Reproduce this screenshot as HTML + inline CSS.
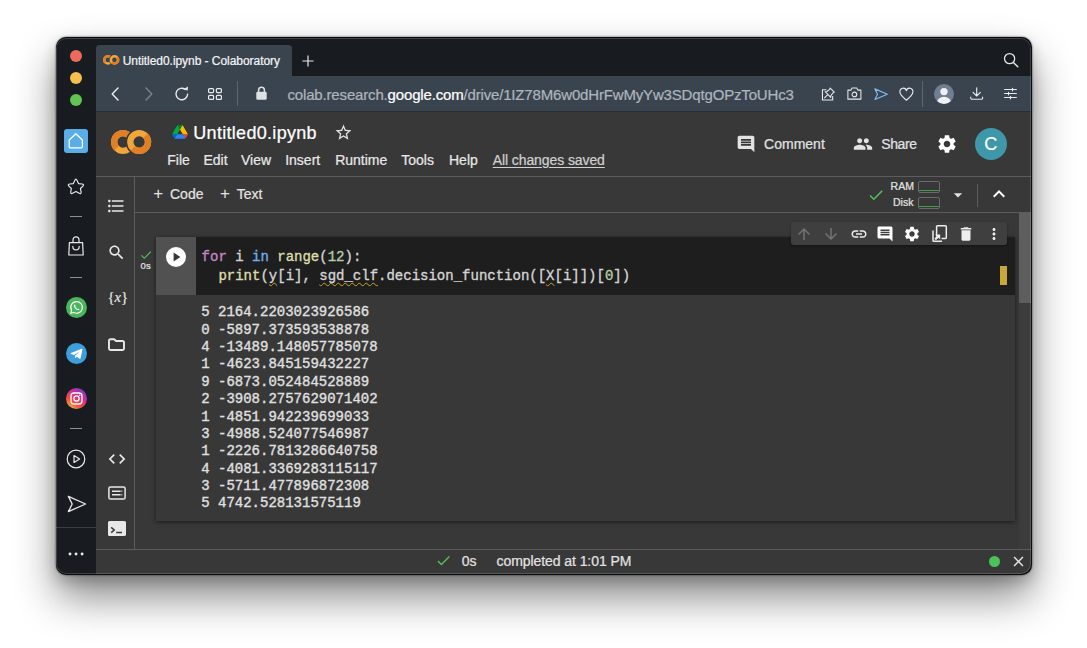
<!DOCTYPE html>
<html lang="en">
<head>
<meta charset="utf-8">
<title>Untitled0.ipynb - Colaboratory</title>
<style>
*{box-sizing:border-box;margin:0;padding:0}
html,body{width:1087px;height:648px;overflow:hidden;background:#fff}
body{position:relative;font-family:"Liberation Sans",sans-serif;color:#e3e3e3}
.abs{position:absolute}
#shadow{position:absolute;left:55.5px;top:37px;width:976px;height:537.5px;border-radius:10.5px;background:#0c0d0f;box-shadow:0 22px 42px rgba(0,0,0,.47),0 0 2px rgba(0,0,0,.8),0 6px 14px rgba(0,0,0,.2)}
#win{position:absolute;left:56px;top:37.5px;width:975px;height:536.5px;border-radius:10px;background:#181b20;overflow:hidden}
#o{position:absolute;left:-56px;top:-37.5px;width:1087px;height:648px}
.t{position:absolute;white-space:pre;line-height:1;-webkit-text-stroke:0.22px currentColor}
.ic{position:absolute;fill:currentColor;overflow:visible}
.mono{font-family:"Liberation Mono","DejaVu Sans Mono",monospace;-webkit-text-stroke:0.35px currentColor}
.sq{text-decoration:underline wavy #cda52b;text-decoration-thickness:1px;text-underline-offset:1.5px;text-decoration-skip-ink:none}
</style>
</head>
<body>
<div id="shadow"></div>
<div id="win"><div id="o">
<div class="abs" style="left:70px;top:50px;width:12px;height:12px;background:#ed6a5e;border-radius:50%"></div>
<div class="abs" style="left:70px;top:72px;width:12px;height:12px;background:#f4bf4f;border-radius:50%"></div>
<div class="abs" style="left:70px;top:94px;width:12px;height:12px;background:#61c554;border-radius:50%"></div>
<div class="abs" style="left:96px;top:45px;width:196px;height:31px;background:#3a444f;border-radius:3.5px 3.5px 0 0"></div>
<div class="abs" style="left:96px;top:76px;width:935px;height:35px;background:#3a444f;"></div>
<div class="abs" style="left:96px;top:111px;width:935px;height:1px;background:#2a2e33;"></div>
<svg class="ic" style="left:102.60px;top:55.30px;" width="16.4" height="9.8" viewBox="0 0 40.2 24"><g fill="none" stroke-width="6.3"><circle cx="12" cy="12" r="8.85" stroke="#f0a63a"/><path d="M18.26 5.74 A8.85 8.85 0 0 0 5.74 18.26" stroke="#e07f26"/></g><circle cx="28.2" cy="12" r="13.6" fill="#3a444f"/><g fill="none" stroke-width="6.3"><circle cx="28.2" cy="12" r="8.85" stroke="#f0a63a"/><path d="M34.46 5.74 A8.85 8.85 0 0 1 21.94 18.26" stroke="#e07f26"/></g></svg>
<div class="t " style="left:122.70px;top:54.50px;font-size:12px;color:#f2f3f4;letter-spacing:-0.05px">Untitled0.ipynb - Colaboratory</div>
<svg class="ic" style="left:301.50px;top:54.50px;" width="12" height="12" viewBox="0 0 12 12"><path d="M6 0.4V11.6M0.4 6H11.6" stroke="#e8eaec" stroke-width="1.2" fill="none"/></svg>
<svg class="ic" style="left:1003.00px;top:52.00px;" width="16" height="16" viewBox="0 0 16 16"><circle cx="6.6" cy="6.6" r="5.1" stroke="#e8eaec" stroke-width="1.25" fill="none"/><path d="M10.4 10.4L14.8 14.8" stroke="#e8eaec" stroke-width="1.35" fill="none" stroke-linecap="round"/></svg>
<svg class="ic" style="left:111.40px;top:86.60px;" width="8" height="14" viewBox="0 0 8 14"><path d="M7 1L1.2 7L7 13" stroke="#e8eaec" stroke-width="1.5" fill="none" stroke-linecap="round" stroke-linejoin="round"/></svg>
<svg class="ic" style="left:145.30px;top:86.60px;" width="8" height="14" viewBox="0 0 8 14"><path d="M1 1L6.8 7L1 13" stroke="#76808b" stroke-width="1.5" fill="none" stroke-linecap="round" stroke-linejoin="round"/></svg>
<svg class="ic" style="left:174.30px;top:85.60px;" width="16" height="16" viewBox="0 0 16 16"><path d="M13.6 8.3A5.8 5.8 0 1 1 11.2 3.3" stroke="#e8eaec" stroke-width="1.4" fill="none" stroke-linecap="round"/><path d="M9.2 3.9L13.9 4.3L13.6 0.3Z" fill="#e8eaec" transform="rotate(8 12 3)"/></svg>
<svg class="ic" style="left:208.40px;top:87.60px;" width="14" height="12" viewBox="0 0 14 12"><g fill="none" stroke="#e8eaec" stroke-width="1.2"><rect x="0.6" y="0.6" width="5" height="4" rx="1"/><rect x="8.4" y="0.6" width="5" height="4" rx="1"/><rect x="0.6" y="7.4" width="5" height="4" rx="1"/><rect x="8.4" y="7.4" width="5" height="4" rx="1"/></g></svg>
<div class="abs" style="left:237px;top:81px;width:1px;height:25px;background:#5c6772;"></div>
<svg class="ic" style="left:256.20px;top:86.20px;" width="11" height="14" viewBox="0 0 11 14"><path d="M2.6 6V4.2a2.9 2.9 0 0 1 5.8 0V6" stroke="#dfe2e5" stroke-width="1.5" fill="none"/><rect x="0.3" y="5.8" width="10.4" height="8" rx="1.4" fill="#dfe2e5"/></svg>
<div class="t " style="left:287.50px;top:86.80px;font-size:15px;color:#aeb5bc;letter-spacing:-0.165px"><span style="color:#aeb5bc">colab.research.</span><span style="color:#fff">google.com</span><span style="color:#aeb5bc">/drive/1IZ78M6w0dHrFwMyYw3SDqtgOPzToUHc3</span></div>
<svg class="ic" style="left:821.30px;top:86.70px;" width="14.4" height="14.4" viewBox="0 0 16 16"><g fill="none" stroke="#e8eaec" stroke-width="1.2" stroke-linejoin="round"><path d="M6 3H1.6V14.4H13V10"/><path d="M10.2 1.2L14.8 5.8L13.4 6.4L11 9.6L10.8 11.6L4.6 5.2L6.6 5L9.6 2.6Z"/><path d="M7.6 8.4L3.6 12.4"/></g></svg>
<svg class="ic" style="left:846.60px;top:87.20px;" width="14.8" height="13" viewBox="0 0 17 15"><g fill="none" stroke="#e8eaec" stroke-width="1.2" stroke-linejoin="round"><path d="M1 3.6H4.6L5.8 1.2H11.2L12.4 3.6H16V14H1Z"/><circle cx="8.5" cy="8.6" r="2.7"/></g></svg>
<svg class="ic" style="left:873.50px;top:87.80px;" width="14.2" height="12.4" viewBox="0 0 16 14"><path d="M1 1L15 7L1 13L4 7Z" fill="none" stroke="#7fbdee" stroke-width="1.3" stroke-linejoin="round"/></svg>
<svg class="ic" style="left:898.70px;top:87.90px;" width="14.8" height="13" viewBox="0 0 16 14"><path d="M8 13.2C2.5 8.8 1 6.6 1 4.4A3.4 3.4 0 0 1 8 3A3.4 3.4 0 0 1 15 4.4C15 6.6 13.5 8.8 8 13.2Z" fill="none" stroke="#e8eaec" stroke-width="1.2" stroke-linejoin="round"/></svg>
<div class="abs" style="left:922.3px;top:81px;width:1px;height:26px;background:#5c6772;"></div>
<svg class="ic" style="left:933.90px;top:84.00px;" width="20" height="20" viewBox="0 0 20 20"><defs><clipPath id="av"><circle cx="10" cy="10" r="10"/></clipPath></defs><circle cx="10" cy="10" r="10" fill="#717d90"/><g clip-path="url(#av)" fill="#eef0f3"><circle cx="10" cy="7.6" r="3.7"/><ellipse cx="10" cy="18.2" rx="7" ry="5.4"/></g></svg>
<svg class="ic" style="left:970.10px;top:87.30px;" width="13.4" height="13" viewBox="0 0 14 13.6"><g fill="none" stroke="#e8eaec" stroke-width="1.2" stroke-linecap="round" stroke-linejoin="round"><path d="M7 0.8V9.2M3.2 5.6L7 9.4L10.8 5.6"/><path d="M0.8 10.6V11.6a1.2 1.2 0 0 0 1.2 1.2H12a1.2 1.2 0 0 0 1.2 -1.2V10.6"/></g></svg>
<svg class="ic" style="left:1004.00px;top:88.00px;" width="13" height="11" viewBox="0 0 13 11"><g fill="none" stroke="#e8eaec" stroke-width="1.15" stroke-linecap="round"><path d="M0.6 1.5H12.4M0.6 5.5H12.4M0.6 9.5H12.4"/><path d="M8.5 0.2V2.8M4.5 4.2V6.8M6.5 8.2V10.8"/></g></svg>
<div class="abs" style="left:64px;top:128.5px;width:24px;height:24px;background:#5aaee8;border-radius:3px"></div>
<svg class="ic" style="left:67.20px;top:131.60px;" width="17.6" height="17.6" viewBox="0 0 16 16"><path d="M2 7.2L8 1.6L14 7.2V13.2a1.2 1.2 0 0 1 -1.2 1.2H3.2A1.2 1.2 0 0 1 2 13.2Z" fill="none" stroke="#fff" stroke-width="1.15" stroke-linejoin="round"/></svg>
<svg class="ic" style="left:67.10px;top:177.55px;" width="17.8" height="16.9" viewBox="0 0 20 19"><path d="M10 1.3C10.5 1.3 10.9 1.9 11.3 2.8L12.9 6.3L16.8 6.8C18.6 7 19.2 7.9 17.9 9.1L15.1 11.8L15.8 15.6C16.1 17.4 15.3 18 13.7 17.1L10 15.2L6.3 17.1C4.7 18 3.9 17.4 4.2 15.6L4.9 11.8L2.1 9.1C0.8 7.9 1.4 7 3.2 6.8L7.1 6.3L8.7 2.8C9.1 1.9 9.5 1.3 10 1.3Z" fill="none" stroke="#e8eaec" stroke-width="1.3" stroke-linejoin="round"/></svg>
<div class="abs" style="left:70px;top:216.2px;width:12px;height:1px;background:#8b9096;"></div>
<svg class="ic" style="left:68.00px;top:236.30px;" width="16" height="20" viewBox="0 0 16 20"><g fill="none" stroke="#e8eaec" stroke-width="1.2" stroke-linejoin="round"><path d="M1.4 6.6H14.6L15.2 19H0.8Z"/><path d="M5 6.4V3.8a3 3 0 0 1 6 0V6.4"/><path d="M4.8 10.4a3.2 3.4 0 0 0 6.4 0" stroke-linecap="round"/></g></svg>
<div class="abs" style="left:70px;top:276.9px;width:12px;height:1px;background:#8b9096;"></div>
<svg class="ic" style="left:65.50px;top:296.50px;" width="21" height="21" viewBox="0 0 21 21"><circle cx="10.5" cy="10.5" r="10.5" fill="#4ab65c"/><path d="M10.6 4.6a5.8 5.8 0 0 0 -5 8.8L4.8 16.2L7.7 15.4A5.8 5.8 0 1 0 10.6 4.6Z" fill="none" stroke="#fff" stroke-width="1.1"/><path d="M8.5 7.6C8.2 7.6 7.7 8.2 7.8 9C8 10.6 10.2 12.9 12 13.2C12.8 13.3 13.5 12.8 13.5 12.3L12.2 11.5L11.6 12C10.7 11.7 9.6 10.6 9.3 9.7L9.8 9.1L9.1 7.7Z" fill="#fff"/></svg>
<svg class="ic" style="left:65.50px;top:342.50px;" width="21" height="21" viewBox="0 0 21 21"><circle cx="10.5" cy="10.5" r="10.5" fill="#3d9fdc"/><path d="M4.4 10.3L15.6 5.8C16.1 5.6 16.5 5.9 16.4 6.5L14.6 15.3C14.5 15.9 14.1 16 13.6 15.7L10.8 13.7L9.4 15C9.2 15.2 9 15.1 9 14.8L9.2 12.5L14 8.2L8 11.9L5.4 11.1C4.8 10.9 4.8 10.5 4.4 10.3Z" fill="#fff"/></svg>
<svg class="ic" style="left:65.50px;top:387.50px;" width="21" height="21" viewBox="0 0 21 21"><defs><linearGradient id="ig" x1="0.15" y1="1" x2="0.85" y2="0"><stop offset="0" stop-color="#fdc04a"/><stop offset="0.3" stop-color="#f5503a"/><stop offset="0.6" stop-color="#d52f8c"/><stop offset="1" stop-color="#6a3fd0"/></linearGradient></defs><circle cx="10.5" cy="10.5" r="10.5" fill="url(#ig)"/><g fill="none" stroke="#fff" stroke-width="1.3"><rect x="5" y="5" width="11" height="11" rx="3"/><circle cx="10.5" cy="10.5" r="2.6"/></g><circle cx="13.7" cy="7.3" r="0.8" fill="#fff"/></svg>
<div class="abs" style="left:70px;top:428px;width:12px;height:1px;background:#8b9096;"></div>
<svg class="ic" style="left:66.00px;top:448.50px;" width="20" height="20" viewBox="0 0 20 20"><g fill="none" stroke="#e8eaec" stroke-width="1.2" stroke-linejoin="round"><circle cx="10" cy="10" r="8.8"/><path d="M8 6.6L13.6 10L8 13.4Z"/></g></svg>
<svg class="ic" style="left:66.50px;top:494.70px;" width="20" height="18" viewBox="0 0 20 18"><path d="M1.4 1.4L18.6 9L1.4 16.6L5.2 9Z" fill="none" stroke="#e8eaec" stroke-width="1.3" stroke-linejoin="round"/></svg>
<div class="abs" style="left:56px;top:527px;width:40px;height:1px;background:#3a3f46;"></div>
<svg class="ic" style="left:67.00px;top:552.00px;" width="18" height="4" viewBox="0 0 18 4"><g fill="#e8eaec"><circle cx="3" cy="2" r="1.45"/><circle cx="9.05" cy="2" r="1.45"/><circle cx="15.1" cy="2" r="1.45"/></g></svg>
<div class="abs" style="left:96px;top:112px;width:935px;height:462px;background:#383838;"></div>
<svg class="ic" style="left:110.80px;top:129.80px;" width="40.2" height="24" viewBox="0 0 40.2 24"><g fill="none" stroke-width="6.3"><circle cx="12" cy="12" r="8.85" stroke="#f0a63a"/><path d="M18.26 5.74 A8.85 8.85 0 0 0 5.74 18.26" stroke="#e07f26"/></g><circle cx="28.2" cy="12" r="13.6" fill="#383838"/><g fill="none" stroke-width="6.3"><circle cx="28.2" cy="12" r="8.85" stroke="#f0a63a"/><path d="M34.46 5.74 A8.85 8.85 0 0 1 21.94 18.26" stroke="#e07f26"/></g></svg>
<svg class="ic" style="left:172.00px;top:125.20px;" width="16" height="13.8" viewBox="0 0 87.3 78"><path d="m6.6 66.85 3.85 6.65c.8 1.4 1.95 2.5 3.3 3.3l13.75-23.8h-27.5c0 1.55.4 3.1 1.2 4.5z" fill="#0066da"/><path d="m43.65 25-13.75-23.8c-1.35.8-2.5 1.9-3.3 3.3l-25.4 44a9.06 9.06 0 0 0 -1.2 4.5h27.5z" fill="#00ac47"/><path d="m73.55 76.8c1.35-.8 2.5-1.9 3.3-3.3l1.6-2.75 7.65-13.25c.8-1.4 1.2-2.95 1.2-4.5h-27.502l5.852 11.5z" fill="#ea4335"/><path d="m43.65 25 13.75-23.8c-1.35-.8-2.9-1.2-4.5-1.2h-18.5c-1.6 0-3.15.45-4.5 1.2z" fill="#00832d"/><path d="m59.8 53h-32.3l-13.75 23.8c1.35.8 2.9 1.2 4.5 1.2h50.8c1.6 0 3.15-.45 4.5-1.2z" fill="#2684fc"/><path d="m73.4 26.500-12.700-22c-.8-1.400-1.950-2.500-3.300-3.300l-13.750 23.800 16.150 28h27.450c0-1.550-.4-3.100-1.200-4.500z" fill="#ffba00"/></svg>
<div class="t " style="left:193.30px;top:123.90px;font-size:18px;color:#fff;letter-spacing:0.3px">Untitled0.ipynb</div>
<svg class="ic" style="left:333.50px;top:122.50px;color:#e3e3e3;" width="19" height="19" viewBox="0 0 24 24"><path d="M22 9.24l-7.19-.62L12 2 9.19 8.63 2 9.24l5.46 4.73L5.82 21 12 17.27 18.18 21l-1.63-7.03L22 9.24zM12 15.4l-3.76 2.27 1-4.28-3.32-2.88 4.38-.38L12 6.1l1.71 4.04 4.38.38-3.32 2.88 1 4.28L12 15.4z"/></svg>
<div class="t " style="left:167.30px;top:152.90px;font-size:14px;color:#e8e8e8;">File</div>
<div class="t " style="left:203.50px;top:152.90px;font-size:14px;color:#e8e8e8;">Edit</div>
<div class="t " style="left:241.00px;top:152.90px;font-size:14px;color:#e8e8e8;">View</div>
<div class="t " style="left:285.20px;top:152.90px;font-size:14px;color:#e8e8e8;">Insert</div>
<div class="t " style="left:335.20px;top:152.90px;font-size:14px;color:#e8e8e8;">Runtime</div>
<div class="t " style="left:401.30px;top:152.90px;font-size:14px;color:#e8e8e8;">Tools</div>
<div class="t " style="left:449.00px;top:152.90px;font-size:14px;color:#e8e8e8;">Help</div>
<div class="t " style="left:492.70px;top:152.90px;font-size:14px;color:#d0d0d0;text-decoration:underline;text-underline-offset:2px;letter-spacing:-0.09px">All changes saved</div>
<div class="abs" style="left:96px;top:176px;width:935px;height:1px;background:#5d5d5d;"></div>
<svg class="ic" style="left:736.20px;top:134.10px;color:#e3e3e3;" width="20" height="20" viewBox="0 0 24 24"><path d="M21.99 4c0-1.1-.89-2-1.99-2H4c-1.1 0-2 .9-2 2v12c0 1.1.9 2 2 2h14l4 4-.01-18zM18 14H6v-2h12v2zm0-3H6V9h12v2zm0-3H6V6h12v2z"/></svg>
<div class="t " style="left:764.10px;top:137.20px;font-size:14px;color:#e3e3e3;">Comment</div>
<svg class="ic" style="left:853.20px;top:133.60px;color:#e3e3e3;" width="20" height="20" viewBox="0 0 24 24"><path d="M16 11c1.66 0 2.99-1.34 2.99-3S17.66 5 16 5c-1.66 0-3 1.34-3 3s1.34 3 3 3zm-8 0c1.66 0 2.99-1.34 2.99-3S9.66 5 8 5C6.34 5 5 6.34 5 8s1.34 3 3 3zm0 2c-2.33 0-7 1.17-7 3.5V19h14v-2.5c0-2.33-4.67-3.5-7-3.5zm8 0c-.29 0-.62.02-.97.05 1.16.84 1.97 1.97 1.97 3.45V19h6v-2.5c0-2.33-4.67-3.5-7-3.5z"/></svg>
<div class="t " style="left:881.30px;top:137.20px;font-size:14px;color:#e3e3e3;letter-spacing:-0.4px">Share</div>
<svg class="ic" style="left:935.70px;top:133.00px;color:#fff;" width="22" height="22" viewBox="0 0 24 24"><path d="M19.14 12.94c.04-.3.06-.61.06-.94 0-.32-.02-.64-.07-.94l2.03-1.58c.18-.14.23-.41.12-.61l-1.92-3.32c-.12-.22-.37-.29-.59-.22l-2.39.96c-.5-.38-1.03-.7-1.62-.94l-.36-2.54c-.04-.24-.24-.41-.48-.41h-3.84c-.24 0-.43.17-.47.41l-.36 2.54c-.59.24-1.13.57-1.62.94l-2.39-.96c-.22-.08-.47 0-.59.22L2.74 8.87c-.12.21-.08.47.12.61l2.03 1.58c-.05.3-.09.63-.09.94s.02.64.07.94l-2.03 1.58c-.18.14-.23.41-.12.61l1.92 3.32c.12.22.37.29.59.22l2.39-.96c.5.38 1.03.7 1.62.94l.36 2.54c.05.24.24.41.48.41h3.84c.24 0 .44-.17.47-.41l.36-2.54c.59-.24 1.13-.56 1.62-.94l2.39.96c.22.08.47 0 .59-.22l1.92-3.32c.12-.22.07-.47-.12-.61l-2.01-1.58zM12 15.6c-1.98 0-3.6-1.62-3.6-3.6s1.62-3.6 3.6-3.6 3.6 1.62 3.6 3.6-1.62 3.6-3.6 3.6z"/></svg>
<div class="abs" style="left:974.8px;top:127.9px;width:32px;height:32px;background:#3f98a9;border-radius:50%"></div>
<div class="t " style="left:984.30px;top:135.30px;font-size:18px;color:#fff;">C</div>
<div class="t " style="left:153.30px;top:185.10px;font-size:17px;color:#e3e3e3;-webkit-text-stroke:0">+</div>
<div class="t " style="left:170.00px;top:187.40px;font-size:14px;color:#e3e3e3;">Code</div>
<div class="t " style="left:220.00px;top:185.10px;font-size:17px;color:#e3e3e3;-webkit-text-stroke:0">+</div>
<div class="t " style="left:236.80px;top:187.40px;font-size:14px;color:#e3e3e3;">Text</div>
<div class="abs" style="left:134px;top:212px;width:897px;height:1px;background:#5d5d5d;"></div>
<svg class="ic" style="left:867.00px;top:186.40px;color:#4fc35a;" width="18" height="18" viewBox="0 0 24 24"><path d="M9 16.17L4.83 12l-1.42 1.41L9 19 21 7l-1.41-1.41z"/></svg>
<div class="t " style="left:890.60px;top:181.45px;font-size:10.5px;color:#e3e3e3;">RAM</div>
<div class="t " style="left:893.00px;top:197.35px;font-size:10.5px;color:#e3e3e3;">Disk</div>
<div class="abs" style="left:918px;top:180.6px;width:21.5px;height:12px;background:transparent;border:1px solid #6a6a6a;border-radius:2px"></div>
<div class="abs" style="left:918px;top:196.6px;width:21.5px;height:12px;background:transparent;border:1px solid #6a6a6a;border-radius:2px"></div>
<div class="abs" style="left:919px;top:189.8px;width:19.5px;height:1px;background:#3f9a4a;"></div>
<div class="abs" style="left:919px;top:205.8px;width:19.5px;height:1px;background:#3f9a4a;"></div>
<svg class="ic" style="left:947.80px;top:185.00px;color:#e3e3e3;" width="20" height="20" viewBox="0 0 24 24"><path d="M7 10l5 5 5-5z"/></svg>
<div class="abs" style="left:977px;top:183.5px;width:1px;height:23px;background:#5d5d5d;"></div>
<svg class="ic" style="left:986.60px;top:182.20px;color:#fff;" width="24" height="24" viewBox="0 0 24 24"><path d="M12 8l-6 6 1.41 1.41L12 10.83l4.59 4.58L18 14z"/></svg>
<div class="abs" style="left:134px;top:177px;width:1px;height:372px;background:#5d5d5d;"></div>
<svg class="ic" style="left:106.40px;top:195.80px;color:#e8e8e8;" width="20" height="20" viewBox="0 0 24 24"><path d="M4 10.5c-.83 0-1.5.67-1.5 1.5s.67 1.5 1.5 1.5 1.5-.67 1.5-1.5-.67-1.5-1.5-1.5zm0-6c-.83 0-1.5.67-1.5 1.5S3.17 7.5 4 7.5 5.5 6.83 5.5 6 4.83 4.5 4 4.5zm0 12c-.83 0-1.5.68-1.5 1.5s.68 1.5 1.5 1.5 1.5-.68 1.5-1.5-.67-1.5-1.5-1.5zM7 19h14v-2H7v2zm0-6h14v-2H7v2zm0-8v2h14V5H7z"/></svg>
<svg class="ic" style="left:107.10px;top:242.50px;color:#e8e8e8;" width="19" height="19" viewBox="0 0 24 24"><path d="M15.5 14h-.79l-.28-.27C15.41 12.59 16 11.11 16 9.5 16 5.91 13.09 3 9.5 3S3 5.91 3 9.5 5.91 16 9.5 16c1.61 0 3.09-.59 4.23-1.57l.27.28v.79l5 4.99L20.49 19l-4.99-5zm-6 0C7.01 14 5 11.99 5 9.5S7.01 5 9.5 5 14 7.01 14 9.5 11.99 14 9.5 14z"/></svg>
<div class="t " style="left:107.80px;top:290.20px;font-size:14px;color:#e8e8e8;font-family:'Liberation Serif',serif;">{<i style="font-size:14.5px;letter-spacing:0.2px">x</i>}</div>
<svg class="ic" style="left:108.10px;top:337.70px;" width="17" height="13" viewBox="0 0 17 13"><path d="M1 2.6a1.4 1.4 0 0 1 1.4 -1.4H6.2L8 3H14.6A1.4 1.4 0 0 1 16 4.4V10.6A1.4 1.4 0 0 1 14.6 12H2.4A1.4 1.4 0 0 1 1 10.6Z" fill="none" stroke="#e8e8e8" stroke-width="1.9" stroke-linejoin="round"/></svg>
<svg class="ic" style="left:106.50px;top:448.60px;color:#e8e8e8;" width="20" height="20" viewBox="0 0 24 24"><path d="M9.4 16.6L4.8 12l4.6-4.6L8 6l-6 6 6 6 1.4-1.4zm5.2 0l4.6-4.6-4.6-4.6L16 6l6 6-6 6-1.4-1.4z"/></svg>
<svg class="ic" style="left:107.50px;top:485.70px;" width="18" height="14" viewBox="0 0 18 14"><rect x="0.9" y="0.9" width="16.2" height="12.2" rx="1.6" fill="none" stroke="#e8e8e8" stroke-width="1.5"/><path d="M4 5.3H12.6M13.4 5.3H14.2M4 8.7H12.6M13.4 8.7H14.2" stroke="#e8e8e8" stroke-width="1.5" fill="none"/></svg>
<svg class="ic" style="left:107.50px;top:521.30px;" width="18" height="15" viewBox="0 0 18 15"><rect x="0" y="0" width="18" height="15" rx="1.6" fill="#e8e8e8"/><path d="M3.2 6.4L6.2 9L3.2 11.6" stroke="#383838" stroke-width="1.5" fill="none"/><path d="M8.2 11.6H14" stroke="#383838" stroke-width="1.5" fill="none"/></svg>
<div class="abs" style="left:1019px;top:213px;width:12px;height:336px;background:#3c3c3c;"></div>
<div class="abs" style="left:1019px;top:213px;width:12px;height:90px;background:#5e5e5e;"></div>
<div class="abs" style="left:156px;top:237px;width:859px;height:283.6px;background:#383838;box-shadow:0 1px 4px rgba(0,0,0,.55)"></div>
<div class="abs" style="left:156px;top:237px;width:40px;height:57.6px;background:#515151;"></div>
<div class="abs" style="left:196px;top:237px;width:819px;height:57.6px;background:#1e1e1e;"></div>
<svg class="ic" style="left:166.00px;top:247.00px;" width="20" height="20" viewBox="0 0 20 20"><circle cx="10" cy="10" r="10" fill="#fff"/><path d="M7.6 5.6L14.4 10L7.6 14.4Z" fill="#383838"/></svg>
<svg class="ic" style="left:138.80px;top:247.70px;color:#4fc35a;" width="14" height="14" viewBox="0 0 24 24"><path d="M9 16.17L4.83 12l-1.42 1.41L9 19 21 7l-1.41-1.41z"/></svg>
<div class="t " style="left:140.60px;top:261.25px;font-size:9.5px;color:#e3e3e3;">0s</div>
<div class="t mono" style="left:201.6px;top:247.5px;font-size:14px;line-height:19px;color:#d4d4d4"><span style="color:#c586c0">for</span> i <span style="color:#6fb0ee">in</span> <span style="color:#dcdcaa">range</span>(<span style="color:#b5cea8">12</span>):
  <span style="color:#dcdcaa">print</span>(<span class="sq">y</span>[i], <span class="sq">sgd_clf</span>.decision_function([<span class="sq">X</span>[i]])[<span style="color:#b5cea8">0</span>])</div>
<div class="t mono" style="left:201.2px;top:304.4px;font-size:14px;line-height:17.36px;color:#e0e0e0">5 2164.2203023926586
0 -5897.373593538878
4 -13489.148057785078
1 -4623.845159432227
9 -6873.052484528889
2 -3908.2757629071402
1 -4851.942239699033
3 -4988.524077546987
1 -2226.7813286640758
4 -4081.3369283115117
3 -5711.477896872308
5 4742.528131575119</div>
<div class="abs" style="left:791px;top:222px;width:216px;height:23.4px;background:#3f3f3f;border-radius:3px;box-shadow:0 1px 3px rgba(0,0,0,.35)"></div>
<svg class="ic" style="left:795.40px;top:225.00px;color:#747474;" width="18" height="18" viewBox="0 0 24 24"><path d="M4 12l1.41 1.41L11 7.83V20h2V7.83l5.58 5.59L20 12l-8-8-8 8z"/></svg>
<svg class="ic" style="left:822.40px;top:225.00px;color:#747474;" width="18" height="18" viewBox="0 0 24 24"><path d="M20 12l-1.41-1.41L13 16.17V4h-2v12.17l-5.58-5.59L4 12l8 8 8-8z"/></svg>
<svg class="ic" style="left:849.50px;top:225.00px;color:#eee;" width="18" height="18" viewBox="0 0 24 24"><path d="M3.9 12c0-1.71 1.39-3.1 3.1-3.1h4V7H7c-2.76 0-5 2.24-5 5s2.24 5 5 5h4v-1.9H7c-1.71 0-3.1-1.39-3.1-3.1zM8 13h8v-2H8v2zm9-6h-4v1.9h4c1.71 0 3.1 1.39 3.1 3.1s-1.39 3.1-3.1 3.1h-4V17h4c2.76 0 5-2.24 5-5s-2.24-5-5-5z"/></svg>
<svg class="ic" style="left:876.30px;top:225.00px;color:#fff;" width="18" height="18" viewBox="0 0 24 24"><path d="M21.99 4c0-1.1-.89-2-1.99-2H4c-1.1 0-2 .9-2 2v12c0 1.1.9 2 2 2h14l4 4-.01-18zM18 14H6v-2h12v2zm0-3H6V9h12v2zm0-3H6V6h12v2z"/></svg>
<svg class="ic" style="left:903.30px;top:225.00px;color:#fff;" width="18" height="18" viewBox="0 0 24 24"><path d="M19.14 12.94c.04-.3.06-.61.06-.94 0-.32-.02-.64-.07-.94l2.03-1.58c.18-.14.23-.41.12-.61l-1.92-3.32c-.12-.22-.37-.29-.59-.22l-2.39.96c-.5-.38-1.03-.7-1.62-.94l-.36-2.54c-.04-.24-.24-.41-.48-.41h-3.84c-.24 0-.43.17-.47.41l-.36 2.54c-.59.24-1.13.57-1.62.94l-2.39-.96c-.22-.08-.47 0-.59.22L2.74 8.87c-.12.21-.08.47.12.61l2.03 1.58c-.05.3-.09.63-.09.94s.02.64.07.94l-2.03 1.58c-.18.14-.23.41-.12.61l1.92 3.32c.12.22.37.29.59.22l2.39-.96c.5.38 1.03.7 1.62.94l.36 2.54c.05.24.24.41.48.41h3.84c.24 0 .44-.17.47-.41l.36-2.54c.59-.24 1.13-.56 1.62-.94l2.39.96c.22.08.47 0 .59-.22l1.92-3.32c.12-.22.07-.47-.12-.61l-2.01-1.58zM12 15.6c-1.98 0-3.6-1.62-3.6-3.6s1.62-3.6 3.6-3.6 3.6 1.62 3.6 3.6-1.62 3.6-3.6 3.6z"/></svg>
<svg class="ic" style="left:957.00px;top:225.00px;color:#eee;" width="18" height="18" viewBox="0 0 24 24"><path d="M6 19c0 1.1.9 2 2 2h8c1.1 0 2-.9 2-2V7H6v12zM19 4h-3.5l-1-1h-5l-1 1H5v2h14V4z"/></svg>
<svg class="ic" style="left:984.60px;top:225.00px;color:#eee;" width="18" height="18" viewBox="0 0 24 24"><path d="M12 8c1.1 0 2-.9 2-2s-.9-2-2-2-2 .9-2 2 .9 2 2 2zm0 2c-1.1 0-2 .9-2 2s.9 2 2 2 2-.9 2-2-.9-2-2-2zm0 6c-1.1 0-2 .9-2 2s.9 2 2 2 2-.9 2-2-.9-2-2-2z"/></svg>
<svg class="ic" style="left:931.50px;top:225.10px;" width="15" height="17" viewBox="0 0 15 17"><g fill="none" stroke="#eee" stroke-width="1.5"><path d="M4.6 11.6V1.6a0.9 0.9 0 0 1 0.9 -0.9H13.4a0.9 0.9 0 0 1 0.9 0.9V12.6a0.9 0.9 0 0 1 -0.9 0.9H9.6"/><path d="M1 5.4V15.4a0.9 0.9 0 0 0 0.9 0.9H10"/></g><path d="M3.2 9.4H8.2V14.4L6.5 12.7L3.9 15.3L2.3 13.7L4.9 11.1Z" fill="#eee"/></svg>
<div class="abs" style="left:1000px;top:266px;width:7.3px;height:19px;background:#c9a83a;"></div>
<div class="abs" style="left:96px;top:548.5px;width:935px;height:1px;background:#5d5d5d;"></div>
<svg class="ic" style="left:435.00px;top:552.30px;color:#4fc35a;" width="17" height="17" viewBox="0 0 24 24"><path d="M9 16.17L4.83 12l-1.42 1.41L9 19 21 7l-1.41-1.41z"/></svg>
<div class="t " style="left:461.80px;top:554.20px;font-size:14px;color:#e3e3e3;">0s</div>
<div class="t " style="left:496.50px;top:554.20px;font-size:14px;color:#e3e3e3;letter-spacing:-0.07px">completed at 1:01 PM</div>
<div class="abs" style="left:989.3px;top:556px;width:11px;height:11px;background:#4cc25a;border-radius:50%"></div>
<svg class="ic" style="left:1009.90px;top:553.00px;color:#e8e8e8;" width="17" height="17" viewBox="0 0 24 24"><path d="M19 6.41L17.59 5 12 10.59 6.41 5 5 6.41 10.59 12 5 17.59 6.41 19 12 13.41 17.59 19 19 17.59 13.41 12z"/></svg>
<div class="abs" style="left:56px;top:37.5px;width:975px;height:536.5px;border-radius:10px;box-shadow:inset 0 0 0 1px rgba(255,255,255,.16)"></div>
</div></div>
</body>
</html>
